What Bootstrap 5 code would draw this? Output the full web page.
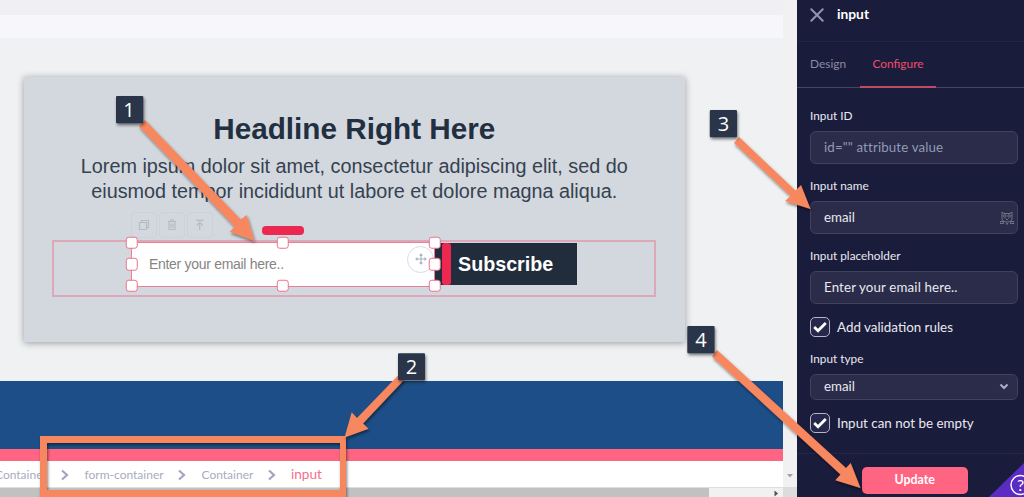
<!DOCTYPE html>
<html lang="en">
<head>
<meta charset="utf-8">
<title>Form input settings</title>
<link href="https://cdn.jsdelivr.net/npm/bootstrap@5.3.0/dist/css/bootstrap.min.css" rel="stylesheet">
<style>
body{width:1024px;height:497px;overflow:hidden;font-family:Lato,sans-serif;background:#f0f1f3}
.stage{width:783px}
.bar-a{height:15px;background:#f0eff4}
.bar-b{height:23px;background:#f7f7fb}
.canvas{height:343px;background:#f0f1f3;padding:39px 0 0 24px}
.hero{width:660.5px;height:265px;background:#d3d7de;box-shadow:0 1px 7px rgba(0,0,0,.36);font-family:"Liberation Sans",sans-serif;padding:34px 28px 0;color:#212f40}
.hero h1{font-size:29.7px;line-height:36px;font-weight:700;margin:0 0 7px 0}
.hero p{font-size:19.81px;line-height:24.5px;color:#35424f;margin:0;white-space:nowrap}
.formrow{width:604px;height:57px;margin-top:37px;border:2px solid #dda9b8;padding:0 0 0 76.500px}
.mailbox{width:304.5px;height:45px;background:#fff;border:1.5px solid #ee7c93;font-size:14px;letter-spacing:-.3px;color:#858585;padding-left:17.5px;margin-top:-.5px}
.knob{position:absolute;width:12.5px;height:12.5px;border:1.3px solid #ee7089;border-radius:3px;background:#fff;transform:translate(-50%,-50%)}
.move{position:absolute;right:0;top:3px;width:27px;height:27px;border:1px solid #d9dbe8;border-radius:50%}
.subscribe{width:141.5px;height:42.5px;margin-top:.5px;background:#212d3c;color:#fff;font-size:19.7px;font-weight:700;padding-left:6.5px}
.subscribe span{margin-top:2px}
.drop-v{width:9px;height:41.5px;border-radius:3px;background:#ec2850;margin-right:7.500px}
.drop-h{position:absolute;left:130px;top:-17px;width:42px;height:9px;border-radius:4px;background:#ec2850}
.tools{position:absolute;left:-1px;top:-31px;gap:2px}
.tools span{width:26px;height:26px;border:1px solid #cdd1db;border-radius:4px}
.blue{height:68px;background:#1d4e87}
.pink{height:12px;background:#ff6482}
.crumbs{height:26px;background:#fff;font-size:12px;color:#a9abc1;white-space:nowrap;padding-top:1px}
.crumbs .here{margin-left:15px;margin-top:-1px;color:#f4708a;font-size:13.600px}
.hscroll{height:10px;background:#f1f1f1;border-top:1px solid #ddd}
.hscroll .thumb{width:709px;background:#c1c1c1}
.vscroll{width:14px;background:#f1f1f1}
.vscroll .corner{height:10px;width:14px;background:#dcdcdc}
.side{width:227px;background:#1a1c3c;color:#e9e9f0;font-size:13.3px}
.side-head{height:42px;border-bottom:1px solid #222545;padding:0 0 12px 13px;font-size:13.800px;color:#fff;gap:13px}
.tabs{height:46px;border-bottom:1px solid #45475f;padding-left:13px;font-size:11.9px}
.tabs div{height:46px}
.tabs .off{color:#8b8da6;width:50px;padding-bottom:2px}
.tabs .on{color:#ee4d6b;width:76px;border-bottom:2px solid #c04a63}
.fields{padding:13px 6px 0 13px;height:365px}
.lab{height:30px;font-size:11.8px;line-height:30px}
.field{height:33px;border:1px solid #40415b;border-radius:6px;background:#2b2c49;padding:0 10px 0 13px;margin-bottom:7px}
.long{letter-spacing:.14px}
.hint{color:#8f9bb8}
.tick{width:20px;height:20px;border:1px solid #b4b5c4;border-radius:5px;background:#26274a}
.checkrow{height:20px;gap:7px;font-size:13.4px}
.foot{height:44px;border-top:1px solid #242644;padding:12.500px 0 0 65px}
.update{width:105.5px;height:27px;border-radius:5px;background:#ff6482;color:#fff;font-size:12.4px;font-weight:700}
.overlay{position:absolute;left:0;top:0;pointer-events:none}
</style>
<script src="https://cdn.jsdelivr.net/npm/bootstrap@5.3.0/dist/js/bootstrap.bundle.min.js"></script>
</head>
<body class="position-relative">
<div class="d-flex h-100">
  <main class="stage d-flex flex-column flex-shrink-0">
    <div class="bar-a"></div><div class="bar-b"></div>
    <section class="canvas">
      <div class="hero">
        <h1 class="text-center">Headline Right Here</h1>
        <p class="text-center">Lorem ipsum dolor sit amet, consectetur adipiscing elit, sed do<br>eiusmod tempor incididunt ut labore et dolore magna aliqua.</p>
        <div class="formrow d-flex align-items-start">
          <div class="mailbox position-relative d-flex align-items-center flex-shrink-0">
            <span>Enter your email here..</span>
            <div class="tools d-flex">
              <span class="d-flex align-items-center justify-content-center"><svg width="12" height="12" fill="none" stroke="#b3bbc6" stroke-width="1.2"><path d="M1.5 3.5h7v7h-7zM3.5 3V1.5h7v7H9"/></svg></span>
              <span class="d-flex align-items-center justify-content-center"><svg width="12" height="12" fill="none" stroke="#b3bbc6" stroke-width="1.1"><path d="M2 2.500h8M4.500 2V1h3v1M3 3v7.500h6V3M5 4.500v4.500M7 4.500v4.500"/></svg></span>
              <span class="d-flex align-items-center justify-content-center"><svg width="12" height="12" fill="none" stroke="#b3bbc6" stroke-width="1.2"><path d="M2 1.300h7.500M5.700 11V3.500M2.700 6.300l3-3 3 3"/></svg></span>
            </div>
            <div class="drop-h"></div>
            <div class="move d-flex align-items-center justify-content-center"><svg width="12" height="12" fill="none" stroke="#a9b4c2" stroke-width="1.100"><path d="M6 1v10M1 6h10M4.600 2.500 6 1l1.400 1.500M4.600 9.500 6 11l1.400-1.500M2.500 4.600 1 6l1.500 1.400M9.500 4.600 11 6 9.500 7.400"/></svg></div>
            <i class="knob" style="left:0;top:0"></i><i class="knob" style="left:50%;top:0"></i><i class="knob" style="left:100.2%;top:0"></i>
            <i class="knob" style="left:0;top:50%"></i><i class="knob" style="left:100.2%;top:50%"></i>
            <i class="knob" style="left:0;top:101%"></i><i class="knob" style="left:50%;top:101%"></i><i class="knob" style="left:100.2%;top:101%"></i>
          </div>
          <div class="subscribe d-flex align-items-center flex-shrink-0"><div class="drop-v"></div><span>Subscribe</span></div>
        </div>
      </div>
    </section>
    <div class="blue"></div><div class="pink"></div>
    <nav class="crumbs d-flex align-items-center">
      <span style="margin-left:-5px;width:66px">Container</span>
      <svg width="8" height="12" fill="none" stroke="#a3a5c0" stroke-width="2.200"><path d="M1 1.500 6 6 1 10.500"/></svg>
      <span style="margin-left:15.5px;width:93.500px">form-container</span>
      <svg width="8" height="12" fill="none" stroke="#a3a5c0" stroke-width="2.200"><path d="M1 1.500 6 6 1 10.500"/></svg>
      <span style="margin-left:15.5px;width:66.500px">Container</span>
      <svg width="8" height="12" fill="none" stroke="#a3a5c0" stroke-width="2.200"><path d="M1 1.500 6 6 1 10.500"/></svg>
      <span class="here">input</span>
    </nav>
    <div class="hscroll d-flex justify-content-between align-items-stretch"><div class="thumb"></div><svg width="10" height="9"><path d="M1.500 2.500v6l3.500-3z" fill="#505050"/></svg></div>
  </main>
  <div class="vscroll d-flex flex-column justify-content-end align-items-center flex-shrink-0"><svg width="8" height="5" class="mb-1"><path d="M1 0h6L4 3.500z" fill="#a3a3a3"/></svg><div class="corner mt-1"></div></div>
  <aside class="side flex-shrink-0">
    <div class="side-head d-flex align-items-center"><svg width="14" height="14" stroke="#9495aa" stroke-width="2" stroke-linecap="round"><path d="M1.300 1.300l11.400 11.400M12.700 1.300 1.300 12.700"/></svg><b>input</b></div>
    <div class="tabs d-flex"><div class="off d-flex align-items-center">Design</div><div class="on d-flex align-items-center justify-content-center">Configure</div></div>
    <div class="fields">
      <div class="lab">Input ID</div><div class="field long d-flex align-items-center hint">id="" attribute value</div>
      <div class="lab">Input name</div><div class="field d-flex align-items-center justify-content-between" style="padding-right:3px">email
        <svg width="14" height="14" fill="none" stroke="#70758a" stroke-width="1"><path d="M2 1l2 1.500h6L12 1v6c0 3-2 4-5 4S2 10 2 7zM5.500 7.500 7 9l1.500-1.500M0 10.500h3.500v2H0zM10.500 10.500H14v2h-3.500zM6 12l1 1.500L8 12"/><circle cx="4.800" cy="5" r="1.300"/><circle cx="9.200" cy="5" r="1.300"/></svg></div>
      <div class="lab">Input placeholder</div><div class="field long d-flex align-items-center mb-0">Enter your email here..</div>
      <div class="checkrow d-flex align-items-center" style="margin-top:13px"><span class="tick d-flex align-items-center justify-content-center"><svg width="14" height="12" fill="none" stroke="#fff" stroke-width="2.800"><path d="M1.200 6 5 9.700 12.800 2"/></svg></span><span>Add validation rules</span></div>
      <div class="lab" style="margin-top:7px">Input type</div><div class="field d-flex align-items-center justify-content-between mb-0" style="height:26px;padding-right:8px">email<svg width="10" height="8" fill="none" stroke="#aeb0c4" stroke-width="2"><path d="M1.500 1.500 5 5l3.500-3.500"/></svg></div>
      <div class="checkrow d-flex align-items-center" style="margin-top:13px"><span class="tick d-flex align-items-center justify-content-center"><svg width="14" height="12" fill="none" stroke="#fff" stroke-width="2.800"><path d="M1.200 6 5 9.700 12.800 2"/></svg></span><span>Input can not be empty</span></div>
    </div>
    <div class="foot"><div class="update d-flex align-items-center justify-content-center">Update</div></div>
  </aside>
</div>
<svg class="overlay" width="1024" height="497" viewBox="0 0 1024 497">
  <defs><filter id="sh" x="-10%" y="-10%" width="125%" height="125%"><feDropShadow dx="1" dy="2" stdDeviation="1.500" flood-color="#000" flood-opacity=".5"/></filter></defs>
  <path d="M989 497 1024 463v34z" fill="#5b2bc4"/>
  <circle cx="1020.500" cy="485" r="9.500" fill="none" stroke="#fff" stroke-width="1.400"/>
  <text x="1020.500" y="490.500" font-family="Lato,sans-serif" font-size="16" fill="#fff" text-anchor="middle">?</text>
  <g fill="#f6875f">
    <g filter="url(#sh)"><path d="M145 120 240.700 219.500 246.700 215 254.400 240.700 229.800 231.700 234.700 226.500 139 126.500z"/></g>
    <g filter="url(#sh)"><path d="M40 436h306v61H40zM47 443v47h293v-47z" fill-rule="evenodd"/></g>
    <g filter="url(#sh)"><path d="M398 375.500 357 418 351.700 412.300 344.500 437.500 368.500 428.700 363 423.500 404 380z"/></g>
    <g filter="url(#sh)"><path d="M739 137 795.500 190.500 801 185 810.500 209 785 201 790.500 196 734 143z"/></g>
    <g filter="url(#sh)"><path d="M717 350 846 468 850.700 463 860.500 488 835.300 480.300 840.500 474.500 712 356.500z"/></g>
  </g>
  <g filter="url(#sh)" fill="#2a364a"><rect x="116" y="96" width="27.300" height="27.300" rx="1"/><rect x="398" y="353.300" width="27" height="27" rx="1"/><rect x="709.800" y="110" width="27.200" height="27.200" rx="1"/><rect x="687.300" y="326" width="27.300" height="27.300" rx="1"/></g>
  <g font-family="'Open Sans',sans-serif" font-size="20" fill="#fff" text-anchor="middle"><text x="129" y="117">1</text><text x="411.500" y="374">2</text><text x="723.400" y="131">3</text><text x="701" y="347">4</text></g>
</svg>
</body>
</html>
